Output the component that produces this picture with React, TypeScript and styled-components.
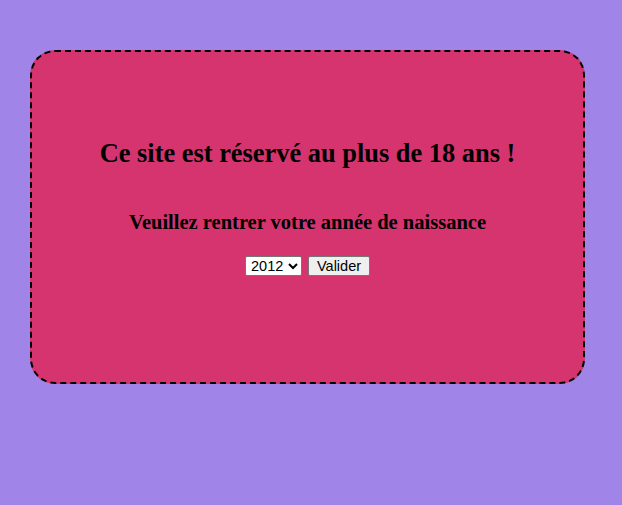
import { useState } from "react";
import styled, { createGlobalStyle } from "styled-components";

const GlobalStyle = createGlobalStyle`
  html, body {
    margin: 0;
    padding: 0;
    background: #a084e8;
  }
  body {
    font-family: "Liberation Serif", "Times New Roman", serif;
  }
`;

const Page = styled.div`
  min-height: 100vh;
  padding: 50px 37px 0 30px;
  box-sizing: border-box;
  background: #a084e8;
`;

const Card = styled.div`
  height: 334px;
  box-sizing: border-box;
  background: #d5346f;
  border: 2px dashed #000;
  border-radius: 25px;
  display: flex;
  flex-direction: column;
  align-items: center;
  padding-top: 86px;
`;

const Title = styled.h1`
  margin: 0;
  font-size: 26.4px;
  font-weight: bold;
  color: #000;
`;

const Subtitle = styled.h2`
  margin: 42px 0 0;
  font-size: 20.5px;
  font-weight: bold;
  color: #000;
`;

const Form = styled.form`
  display: flex;
  align-items: center;
  gap: 6px;
  margin-top: 22px;
`;

const YearSelect = styled.select`
  font-family: "Liberation Sans", Arial, sans-serif;
  font-size: 14.5px;
  width: 57px;
  height: 20px;
  padding: 0 1px;
  background: #fff;
  border: 1px solid #767676;
  border-radius: 2px;
  color: #000;
`;

const SubmitButton = styled.button`
  font-family: "Liberation Sans", Arial, sans-serif;
  font-size: 14.5px;
  width: 62px;
  height: 20px;
  padding: 0;
  background: #efefef;
  border: 1px solid #767676;
  border-radius: 2px;
  color: #000;
`;

const years = Array.from({ length: 100 }, (_, i) => 2023 - i);

export default function App() {
  const [year, setYear] = useState("2012");

  return (
    <>
      <GlobalStyle />
      <Page>
        <Card>
          <Title>Ce site est réservé au plus de 18 ans !</Title>
          <Subtitle>Veuillez rentrer votre année de naissance</Subtitle>
          <Form onSubmit={(e) => e.preventDefault()}>
            <YearSelect value={year} onChange={(e) => setYear(e.target.value)}>
              {years.map((y) => (
                <option key={y} value={y}>
                  {y}
                </option>
              ))}
            </YearSelect>
            <SubmitButton type="submit">Valider</SubmitButton>
          </Form>
        </Card>
      </Page>
    </>
  );
}
